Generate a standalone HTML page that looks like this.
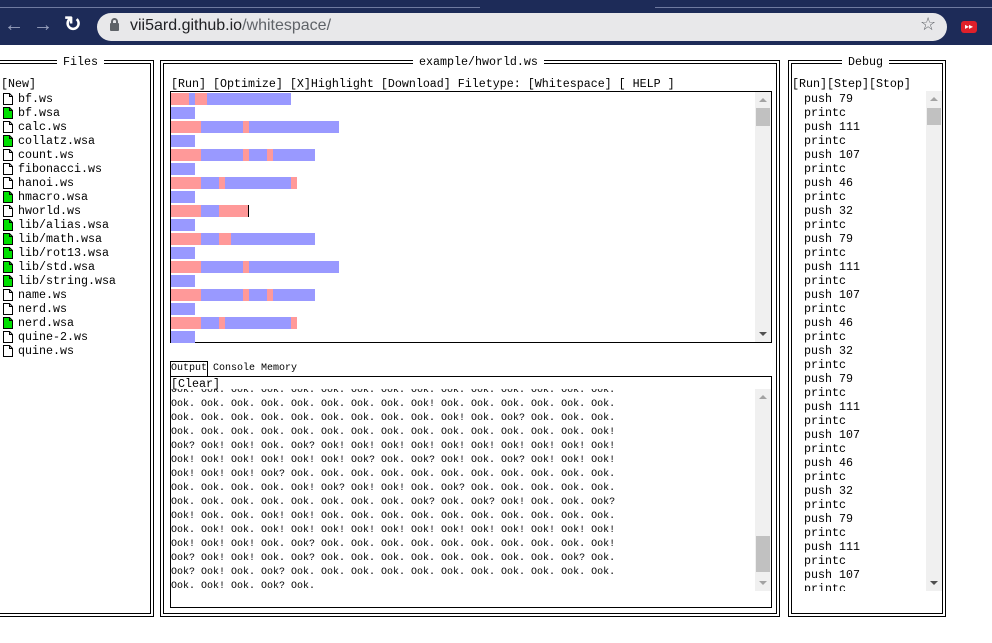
<!DOCTYPE html>
<html><head><meta charset="utf-8"><style>
*{margin:0;padding:0;box-sizing:border-box}
body{width:992px;height:643px;overflow:hidden;background:#fff;position:relative;font-family:"Liberation Mono",monospace;font-size:11.67px;color:#000}
.a{position:absolute}
.box{position:absolute;border:4px double #000}
.ttl{position:absolute;top:-9px;background:#fff;padding:0 6px;line-height:14px;white-space:pre}
.ln{position:absolute;left:0;height:14px;line-height:14px;white-space:pre}
.b{position:absolute;height:12px}
.p{background:#ff9999}.u{background:#9999ff}
.sb{position:absolute;background:#f0f0f0;width:16px}
.th{position:absolute;left:1px;width:14px;background:#c1c1c1}
.up,.dn{position:absolute;left:4px;width:0;height:0;border-left:4px solid transparent;border-right:4px solid transparent}
.up{top:6px;border-bottom:4px solid #a3a3a3}
.dn{bottom:6px;border-top:4px solid #505050}
.ic{position:absolute;left:3px;width:10px;height:12px}
</style></head><body>
<!-- browser chrome -->
<div class="a" style="left:0;top:0;width:992px;height:45px;background:#1d2b58"></div>
<div class="a" style="left:0;top:7px;width:480px;height:1px;background:#6f7aa0"></div>
<div class="a" style="left:655px;top:7px;width:337px;height:1px;background:#6f7aa0"></div>
<div class="a" style="left:4px;top:14px;color:#9aa3bf;font:20px 'Liberation Sans',sans-serif">&#8592;</div>
<div class="a" style="left:33px;top:14px;color:#9aa3bf;font:20px 'Liberation Sans',sans-serif">&#8594;</div>
<div class="a" style="left:64px;top:12px;color:#fff;font:bold 21px 'Liberation Sans',sans-serif">&#8635;</div>
<div class="a" style="left:97px;top:13px;width:850px;height:28px;border-radius:14px;background:#e8e8ea"></div>
<div class="a" style="left:110px;top:23px;width:9px;height:8px;background:#5f6368;border-radius:1px"></div>
<div class="a" style="left:111px;top:18px;width:7px;height:7px;border:2px solid #5f6368;border-radius:4px 4px 0 0"></div>
<div class="a" style="left:130px;top:17px;font:16px 'Liberation Sans',sans-serif;color:#202124">vii5ard.github.io<span style="color:#5f6368">/whitespace/</span></div>
<div class="a" style="left:920px;top:14px;font:18px 'Liberation Sans',sans-serif;color:#5f6368">&#9734;</div>
<div class="a" style="left:961px;top:21px;width:16px;height:12px;background:#e0202a;border-radius:3px;color:#fff;font:8px sans-serif;text-align:center;line-height:12px">&#9656;&#9656;</div>

<!-- Files -->
<div class="box" style="left:-10px;top:60px;width:164px;height:557px">
<div class="ttl" style="left:63px">Files</div>
</div>
<div class="a" style="left:1px;top:77px;line-height:14px;white-space:pre">[New]</div>
<div class="a" style="left:0;top:92px">
<div id="files"></div>
</div>

<!-- Editor -->
<div class="box" style="left:160px;top:60px;width:620px;height:557px">
<div class="ttl" style="left:249px">example/hworld.ws</div>
</div>
<div class="a" style="left:171px;top:77px;line-height:14px;white-space:pre">[Run] [Optimize] [X]Highlight [Download] Filetype: [Whitespace] [ HELP ]</div>
<div class="a" style="left:170px;top:91px;width:602px;height:252px;border:1px solid #000"></div>
<div id="bars"></div>
<div class="sb" style="left:755px;top:92px;height:250px"><div class="up"></div><div class="th" style="top:16px;height:18px"></div><div class="dn"></div></div>

<div class="a" style="left:170px;top:361px;width:38px;height:16px;border:1px solid #000;border-bottom:none;line-height:14px;font-size:10px;text-align:center">Output</div>
<div class="a" style="left:213px;top:362px;line-height:14px;white-space:pre;font-size:10px">Console Memory</div>
<div class="a" style="left:170px;top:376px;width:602px;height:232px;border:1px solid #000;overflow:hidden"></div>
<div class="a" style="left:171px;top:377px;line-height:14px">[Clear]</div>
<div class="a" style="left:171px;top:389px;width:580px;height:202px;overflow:hidden">
<div id="out" class="a" style="left:0;top:-5px;font-size:10px;line-height:14px;white-space:pre"></div>
</div>
<div class="sb" style="left:755px;top:389px;height:202px"><div class="up"></div><div class="th" style="top:147px;height:36px"></div><div class="dn" style="border-top-color:#a3a3a3"></div></div>

<!-- Debug -->
<div class="box" style="left:788px;top:60px;width:158px;height:557px">
<div class="ttl" style="left:50px">Debug</div>
</div>
<div class="a" style="left:792px;top:77px;line-height:14px;white-space:pre">[Run][Step][Stop]</div>
<div class="a" style="left:804px;top:92px;width:120px;height:499px;overflow:hidden"><div id="dbg" style="line-height:14px;white-space:pre"></div></div>
<div class="sb" style="left:926px;top:91px;height:500px"><div class="up"></div><div class="th" style="top:17px;height:17px"></div><div class="dn"></div></div>

<script>
var files=[["bf.ws",0],["bf.wsa",1],["calc.ws",0],["collatz.wsa",1],["count.ws",0],["fibonacci.ws",0],["hanoi.ws",0],["hmacro.wsa",1],["hworld.ws",0],["lib/alias.wsa",1],["lib/math.wsa",1],["lib/rot13.wsa",1],["lib/std.wsa",1],["lib/string.wsa",1],["name.ws",0],["nerd.ws",0],["nerd.wsa",1],["quine-2.ws",0],["quine.ws",0]];
var h="";files.forEach(function(f,i){var y=i*14;
h+='<svg class="ic" style="top:'+(y+1)+'px" viewBox="0 0 10 12"><path d="M0.5 0.5H6.5L9.5 3.5V11.5H0.5Z" fill="'+(f[1]?'#00e000':'#fff')+'" stroke="#000"/><path d="M6.5 0.5V3.5H9.5" fill="none" stroke="#000"/></svg>';
h+='<div class="ln" style="left:18px;top:'+y+'px">'+f[0]+'</div>';});
document.getElementById("files").innerHTML=h;
var R={a:[["p",0,18],["u",18,6],["p",24,12],["u",36,84]],s:[["u",0,24]],
c:[["p",0,30],["u",30,42],["p",72,6],["u",78,90]],
e:[["p",0,30],["u",30,42],["p",72,6],["u",78,18],["p",96,6],["u",102,42]],
g:[["p",0,30],["u",30,18],["p",48,6],["u",54,66],["p",120,6]],
i:[["p",0,30],["u",30,18],["p",48,30]],
k:[["p",0,30],["u",30,18],["p",48,12],["u",60,84]]};
var seq="ascsesgsiskscsesgs";h="";
for(var i=0;i<seq.length;i++){var y=93+i*14;R[seq[i]].forEach(function(b){h+='<div class="b '+b[0]+'" style="left:'+(171+b[1])+'px;top:'+y+'px;width:'+b[2]+'px"></div>';});}
h+='<div class="a" style="left:248px;top:205px;width:1px;height:12px;background:#000"></div>';
document.getElementById("bars").innerHTML=h;
var o=["Ook. Ook. Ook. Ook. Ook. Ook. Ook. Ook. Ook. Ook. Ook. Ook. Ook. Ook. Ook.",
"Ook. Ook. Ook. Ook. Ook. Ook. Ook. Ook. Ook! Ook. Ook. Ook. Ook. Ook. Ook.",
"Ook. Ook. Ook. Ook. Ook. Ook. Ook. Ook. Ook. Ook! Ook. Ook? Ook. Ook. Ook.",
"Ook. Ook. Ook. Ook. Ook. Ook. Ook. Ook. Ook. Ook. Ook. Ook. Ook. Ook. Ook!",
"Ook? Ook! Ook! Ook. Ook? Ook! Ook! Ook! Ook! Ook! Ook! Ook! Ook! Ook! Ook!",
"Ook! Ook! Ook! Ook! Ook! Ook! Ook? Ook. Ook? Ook! Ook. Ook? Ook! Ook! Ook!",
"Ook! Ook! Ook! Ook? Ook. Ook. Ook. Ook. Ook. Ook. Ook. Ook. Ook. Ook. Ook.",
"Ook. Ook. Ook. Ook. Ook! Ook? Ook! Ook! Ook. Ook? Ook. Ook. Ook. Ook. Ook.",
"Ook. Ook. Ook. Ook. Ook. Ook. Ook. Ook. Ook? Ook. Ook? Ook! Ook. Ook. Ook?",
"Ook! Ook. Ook. Ook! Ook! Ook. Ook. Ook. Ook. Ook. Ook. Ook. Ook. Ook. Ook.",
"Ook. Ook! Ook. Ook! Ook! Ook! Ook! Ook! Ook! Ook! Ook! Ook! Ook! Ook! Ook!",
"Ook! Ook! Ook! Ook. Ook? Ook. Ook. Ook. Ook. Ook. Ook. Ook. Ook. Ook. Ook!",
"Ook? Ook! Ook! Ook. Ook? Ook. Ook. Ook. Ook. Ook. Ook. Ook. Ook. Ook? Ook.",
"Ook? Ook! Ook. Ook? Ook. Ook. Ook. Ook. Ook. Ook. Ook. Ook. Ook. Ook. Ook.",
"Ook. Ook! Ook. Ook? Ook."];
document.getElementById("out").textContent=o.join("\n");
var d=["push 79","printc","push 111","printc","push 107","printc","push 46","printc","push 32","printc"],t=[];
for(var i=0;i<40;i++)t.push(d[i%10]);
document.getElementById("dbg").textContent=t.join("\n");
</script>
</body></html>
